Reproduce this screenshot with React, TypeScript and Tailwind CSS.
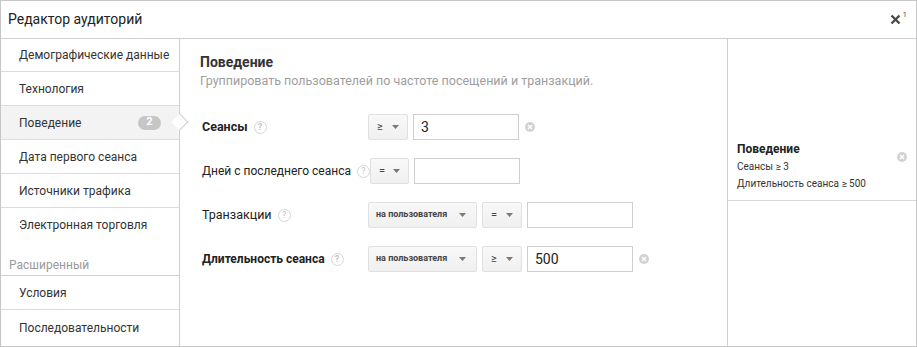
import React from "react";

const Help = () => (
  <span className="inline-flex items-center justify-center w-[13px] h-[13px] rounded-full border border-[#d6d6d6] text-[9px] leading-none text-[#c4c4c4] ml-[6px]">?</span>
);

const Remove = () => (
  <span className="inline-flex items-center justify-center w-[10px] h-[10px] rounded-full bg-[#d2d2d2]">
    <svg width="6" height="6" viewBox="0 0 6 6"><path d="M1 1L5 5M5 1L1 5" stroke="#fff" strokeWidth="1.4" /></svg>
  </span>
);

const Caret = () => (
  <svg width="7" height="4" viewBox="0 0 7 4"><path d="M0 0H7L3.5 4Z" fill="#7a7a7a" /></svg>
);

const Select = ({ label, w, bold }: { label: string; w: string; bold?: boolean }) => (
  <div className={`${w} h-[26px] flex items-center justify-between border border-[#e0e0e0] rounded-[2px] bg-gradient-to-b from-[#f8f8f8] to-[#f0f0f0] text-[#444] whitespace-nowrap ${bold ? "font-bold text-[9px] pl-[7px] pr-[10px]" : "text-[11px] px-[8px]"}`}>
    <span>{label}</span>
    <Caret />
  </div>
);

const Input = ({ value }: { value?: string }) => (
  <div className="w-[106px] h-[26px] border border-[#cfcfcf] flex items-center px-[7px] text-[14px] text-[#222] bg-white">{value}</div>
);

export default function App() {
  const nav = [
    "Демографические данные",
    "Технология",
    "Поведение",
    "Дата первого сеанса",
    "Источники трафика",
  ];
  return (
    <div className="w-[917px] h-[347px] bg-white border border-[#c6c6c6] flex flex-col text-[#222]" style={{ fontFamily: "Roboto, 'Noto Sans', sans-serif" }}>
      <div className="h-[38px] shrink-0 border-b border-[#cfcfcf] flex items-center justify-between pl-[7px] pr-[9px]">
        <span className="text-[14px] text-[#222]">Редактор аудиторий</span>
        <span className="flex items-start text-[#555]">
          <svg width="11" height="11" viewBox="0 0 11 11"><path d="M1.5 1.5L9.5 9.5M9.5 1.5L1.5 9.5" stroke="#4a4a4a" strokeWidth="2.4" /></svg>
          <span className="text-[8px] leading-none ml-[2px] -mt-[3px]">1</span>
        </span>
      </div>
      <div className="flex flex-1 min-h-0">
        <div className="w-[179px] shrink-0 border-r border-[#cfcfcf] flex flex-col">
          {nav.map((n, i) => (
            <div
              key={n}
              className={`relative ${i === 0 ? "h-[33px]" : "h-[34px]"} shrink-0 border-b border-[#dcdcdc] flex items-center justify-between pl-[18px] pr-[18px] text-[12px] whitespace-nowrap text-[#333] ${n === "Поведение" ? "bg-[#f3f3f3]" : ""}`}
            >
              <span>{n}</span>
              {n === "Поведение" && (
                <>
                  <span className="w-[23px] h-[14px] rounded-full bg-[#c6c6c6] text-white text-[11px] font-bold flex items-center justify-center">2</span>
                  <span className="absolute right-[-7px] top-[10px] w-[12px] h-[12px] rotate-45 bg-white border-t border-r border-[#cfcfcf]" />
                </>
              )}
            </div>
          ))}
          <div className="h-[34px] shrink-0 flex items-center pl-[18px] text-[12px] text-[#333]">Электронная торговля</div>
          <div className="h-[34px] shrink-0 border-b border-[#cfcfcf] flex items-end pb-[1px] pl-[8px] text-[12px] text-[#9a9a9a]">Расширенный</div>
          <div className="h-[34px] shrink-0 border-b border-[#dcdcdc] flex items-center pl-[18px] text-[12px] text-[#333]">Условия</div>
          <div className="flex-1 flex items-center pl-[18px] text-[12px] text-[#333]">Последовательности</div>
        </div>
        <div className="flex-1 pl-[20px] pt-[13px]">
          <div className="text-[14px] leading-[20px] font-bold text-[#333]">Поведение</div>
          <div className="text-[12.5px] leading-[18px] text-[#9e9e9e]">Группировать пользователей по частоте посещений и транзакций.</div>
          <div className="mt-[15px] flex flex-col">
            <div className="h-[44px] flex items-center">
              <div className="w-[168px] pl-[2px] flex items-center text-[12.5px] font-bold text-[#222]">Сеансы<Help /></div>
              <Select label="≥" w="w-[40px]" />
              <div className="w-[5px]" />
              <Input value="3" />
              <div className="w-[6px]" />
              <Remove />
            </div>
            <div className="h-[44px] flex items-center">
              <div className="min-w-[168px] pl-[2px] pr-0 flex items-center text-[12px] text-[#222]">Дней с последнего сеанса<Help /></div>
              <Select label="=" w="w-[39px]" />
              <div className="w-[5px]" />
              <Input />
            </div>
            <div className="h-[44px] flex items-center">
              <div className="w-[168px] pl-[2px] flex items-center text-[12.5px] text-[#222]">Транзакции<Help /></div>
              <Select label="на пользователя" w="w-[109px]" bold />
              <div className="w-[5px]" />
              <Select label="=" w="w-[40px]" />
              <div className="w-[5px]" />
              <Input />
            </div>
            <div className="h-[44px] flex items-center">
              <div className="w-[168px] pl-[2px] flex items-center text-[12px] font-bold text-[#222]">Длительность сеанса<Help /></div>
              <Select label="на пользователя" w="w-[109px]" bold />
              <div className="w-[5px]" />
              <Select label="≥" w="w-[40px]" />
              <div className="w-[5px]" />
              <Input value="500" />
              <div className="w-[6px]" />
              <Remove />
            </div>
          </div>
        </div>
        <div className="w-[189px] shrink-0 border-l border-[#cfcfcf]">
          <div className="relative border-b border-[#d6d6d6] pt-[102px] pb-[8px] pl-[9px]">
            <div className="text-[12px] leading-[17px] font-bold text-[#222]">Поведение</div>
            <div className="text-[10px] leading-[17px] text-[#333]">Сеансы ≥ 3</div>
            <div className="text-[10px] leading-[17px] text-[#333]">Длительность сеанса ≥ 500</div>
            <span className="absolute right-[9px] top-[104px]"><Remove /></span>
          </div>
        </div>
      </div>
    </div>
  );
}
